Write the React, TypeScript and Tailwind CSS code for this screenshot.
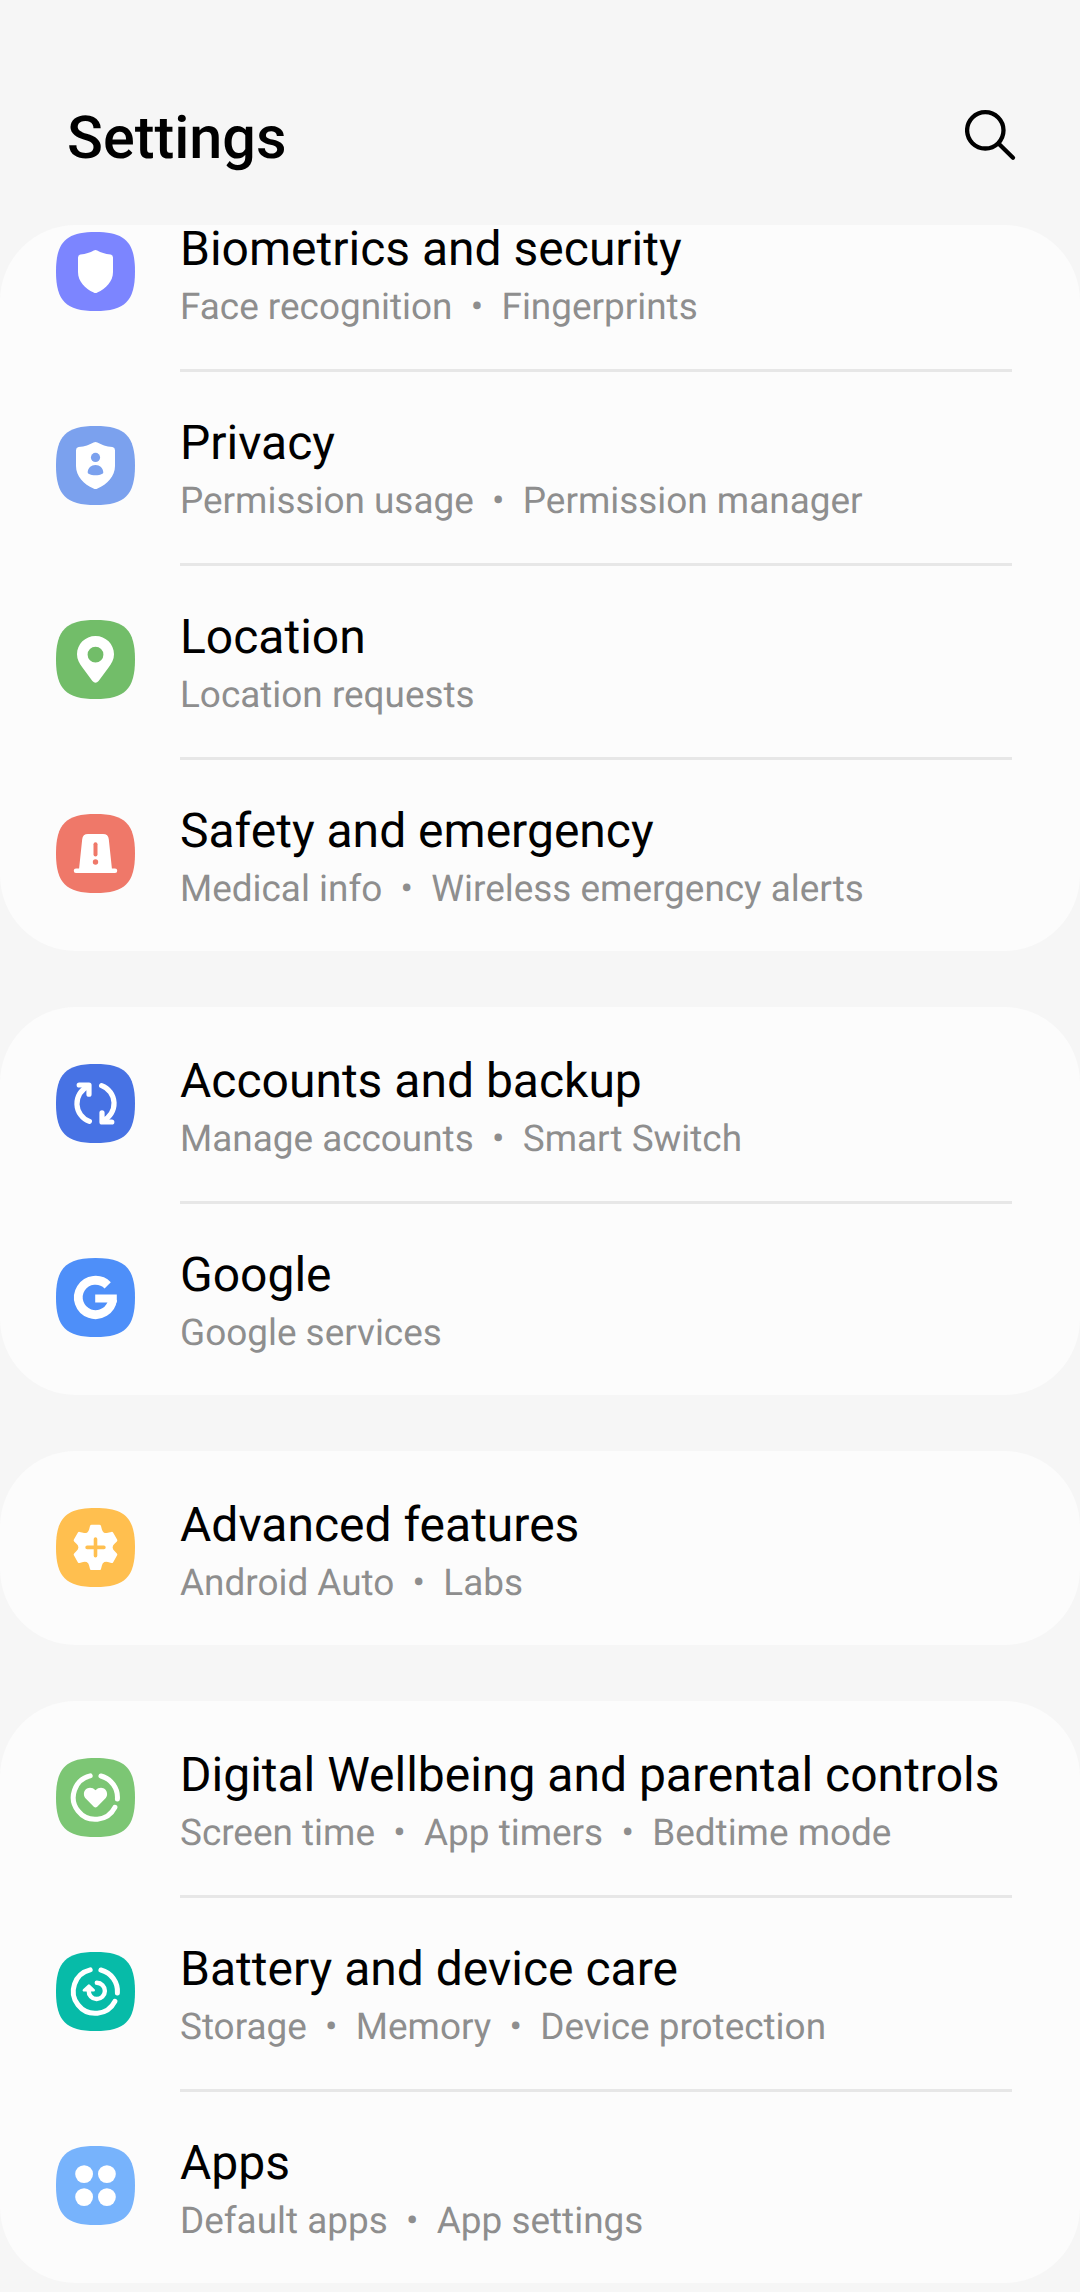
import { FunctionComponent, ReactNode } from "react";

type SettingsItem = {
  title: string;
  details: string[];
  color: string;
  icon: ReactNode;
};

type SettingsRowProps = SettingsItem & {
  divided?: boolean;
};

const Ring = () => (
  <g fill="none" stroke="#fff" strokeWidth="5" strokeLinecap="round">
    <path d="M34.2 17.9A22 22 0 1 0 58.9 49.3" />
    <path d="M44.9 18A22 22 0 0 1 61.4 41" />
  </g>
);

const ShieldIcon = () => (
  <path
    fill="#fff"
    d="M37.8 18.4Q39.5 17.6 41.2 18.4C45 20.5 49 21.8 54.5 22.6Q57 23 57 25.5V40C57 49.5 50 56.5 41.3 60.6Q39.5 61.6 37.7 60.6C29 56.5 22 49.5 22 40V25.5Q22 23 24.5 22.6C30 21.8 34 20.5 37.8 18.4Z"
  />
);

const PrivacyIcon = () => (
  <>
    <path
      fill="#fff"
      d="M37.6 16.4Q39.5 15.5 41.4 16.4C45.6 18.7 50 20.2 56.4 21.1Q59 21.6 59 24.3V40C59 50.5 51.2 58.2 41.5 62.6Q39.5 63.6 37.5 62.6C27.8 58.2 20 50.5 20 40V24.3Q20 21.6 22.6 21.1C29 20.2 33.4 18.7 37.6 16.4Z"
    />
    <circle cx="39.5" cy="31.4" r="4.6" fill="currentColor" />
    <path
      fill="currentColor"
      d="M31.7 46.4C31.7 42 35.2 38.9 39.5 38.9S47.3 42 47.3 46.4Q47.3 47.4 46.4 47.8C42.3 49.8 36.7 49.8 32.6 47.8Q31.7 47.4 31.7 46.4Z"
    />
  </>
);

const LocationIcon = () => (
  <path
    fill="#fff"
    fillRule="evenodd"
    d="M39.5 16C29.2 16 21 24.2 21 34.3C21 39.5 23.3 43.4 26.6 47.8L36.4 61.1Q39.5 64.6 42.6 61.1L52.4 47.8C55.7 43.4 58 39.5 58 34.3C58 24.2 49.8 16 39.5 16ZM39.5 26.8A7.9 7.9 0 1 1 39.5 42.6A7.9 7.9 0 1 1 39.5 26.8Z"
  />
);

const SafetyIcon = () => (
  <>
    <path
      fill="#fff"
      d="M32 20H47Q52.3 20 52.8 25.2L55.9 54.4H59A2.25 2.25 0 0 1 59 58.9H20A2.25 2.25 0 0 1 20 54.4H23.1L26.2 25.2Q26.7 20 32 20Z"
    />
    <path d="M39.5 30.2V40.4" stroke="currentColor" strokeWidth="4" strokeLinecap="round" />
    <circle cx="39.5" cy="48" r="2.7" fill="currentColor" />
  </>
);

const SyncIcon = () => (
  <g fill="none" stroke="#fff" strokeWidth="5.2" strokeLinecap="round" strokeLinejoin="round">
    <path d="M33.4 57.4A19 19 0 0 1 32 22.3" />
    <path d="M23.2 21H33V30.2" />
    <path d="M45.6 21.6A19 19 0 0 1 47 56.7" />
    <path d="M55.8 58H46V48.8" />
  </g>
);

const GoogleIcon = () => (
  <g fill="none" stroke="#fff">
    <path d="M51.7 27.3A17.2 17.2 0 1 0 56.6 41.5" strokeWidth="8.8" />
    <path d="M39.2 40.5H60.8" strokeWidth="8" />
  </g>
);

const AdvancedIcon = () => (
  <>
    <circle cx="39.5" cy="39.4" r="17" fill="#fff" />
    {[0, 60, 120, 180, 240, 300].map((angle) => (
      <path
        key={angle}
        transform={`rotate(${angle} 39.5 39.4)`}
        fill="#fff"
        d="M31 24.8Q32.6 23.4 33.1 21.4L34 17.9Q34.4 16.7 35.6 16.7H43.4Q44.6 16.7 45 17.9L45.9 21.4Q46.4 23.4 48 24.8Z"
      />
    ))}
    <path
      d="M39.5 31V47.8M31.1 39.4H47.9"
      stroke="currentColor"
      strokeWidth="3.6"
      strokeLinecap="round"
    />
  </>
);

const WellbeingIcon = () => (
  <>
    <Ring />
    <path
      fill="#fff"
      d="M39.5 32.3C41 30.6 43 29.8 45 29.8C48.4 29.8 51.1 32.6 51.1 36C51.1 38 50.3 39.6 48.8 41.1L41.2 48.8Q39.5 50.4 37.8 48.8L30.2 41.1C28.7 39.6 27.9 38 27.9 36C27.9 32.6 30.6 29.8 34 29.8C36 29.8 38 30.6 39.5 32.3Z"
    />
  </>
);

const BatteryIcon = () => (
  <>
    <Ring />
    <path
      d="M40.8 30.8A8.1 8.1 0 1 1 32.7 38.5"
      fill="none"
      stroke="#fff"
      strokeWidth="4.4"
      strokeLinecap="round"
    />
    <path
      d="M32.9 33.8L28 38.2H37.6Z"
      fill="#fff"
      stroke="#fff"
      strokeWidth="2.8"
      strokeLinejoin="round"
    />
  </>
);

const AppsIcon = () => (
  <g fill="#fff">
    <circle cx="28.1" cy="28.1" r="8.9" />
    <circle cx="50.9" cy="28.1" r="8.9" />
    <circle cx="28.1" cy="51.1" r="8.9" />
    <circle cx="50.9" cy="51.1" r="8.9" />
  </g>
);

const groups: SettingsItem[][] = [
  [
    {
      title: "Biometrics and security",
      details: ["Face recognition", "Fingerprints"],
      color: "text-[#7c85ff]",
      icon: <ShieldIcon />,
    },
    {
      title: "Privacy",
      details: ["Permission usage", "Permission manager"],
      color: "text-[#7ba1ee]",
      icon: <PrivacyIcon />,
    },
    {
      title: "Location",
      details: ["Location requests"],
      color: "text-[#72bd69]",
      icon: <LocationIcon />,
    },
    {
      title: "Safety and emergency",
      details: ["Medical info", "Wireless emergency alerts"],
      color: "text-[#ef7869]",
      icon: <SafetyIcon />,
    },
  ],
  [
    {
      title: "Accounts and backup",
      details: ["Manage accounts", "Smart Switch"],
      color: "text-[#4772e4]",
      icon: <SyncIcon />,
    },
    {
      title: "Google",
      details: ["Google services"],
      color: "text-[#4e8ff9]",
      icon: <GoogleIcon />,
    },
  ],
  [
    {
      title: "Advanced features",
      details: ["Android Auto", "Labs"],
      color: "text-[#ffbf4f]",
      icon: <AdvancedIcon />,
    },
  ],
  [
    {
      title: "Digital Wellbeing and parental controls",
      details: ["Screen time", "App timers", "Bedtime mode"],
      color: "text-[#7cc674]",
      icon: <WellbeingIcon />,
    },
    {
      title: "Battery and device care",
      details: ["Storage", "Memory", "Device protection"],
      color: "text-[#07bba8]",
      icon: <BatteryIcon />,
    },
    {
      title: "Apps",
      details: ["Default apps", "App settings"],
      color: "text-[#77b3fc]",
      icon: <AppsIcon />,
    },
  ],
];

const SettingsRow: FunctionComponent<SettingsRowProps> = ({
  title,
  details,
  color,
  icon,
  divided,
}) => (
  <div className="flex h-[194px] shrink-0 pl-14 pr-[68px]">
    <svg viewBox="0 0 79 79" className={`mt-[57px] size-[79px] shrink-0 ${color}`}>
      <path
        fill="currentColor"
        d="M0 39.5C0 10 10 0 39.5 0S79 10 79 39.5S69 79 39.5 79S0 69 0 39.5Z"
      />
      {icon}
    </svg>
    <div
      className={`ml-[45px] flex-1 whitespace-pre border-t-[3px] pt-[48px] ${
        divided ? "border-[#e7e7e7]" : "border-transparent"
      }`}
    >
      <h2 className="text-5xl leading-[46px] text-black">{title}</h2>
      <p className="mt-3.5 text-[36.9px] leading-[44px] text-[#8e8e8e]">
        {details.join("  •  ")}
      </p>
    </div>
  </div>
);

export default function App() {
  return (
    <div className="flex h-[2292px] w-[1080px] flex-col overflow-hidden bg-[#f6f6f6] font-['Roboto',sans-serif] [text-rendering:geometricPrecision]">
      <header className="flex h-[225px] shrink-0 items-start justify-between pl-[67px] pr-[63px]">
        <h1 className="mt-[105px] text-[59.3px] font-medium leading-[68px] text-black">
          Settings
        </h1>
        <svg
          viewBox="0 0 52 52"
          className="mt-[109px] size-[52px]"
          fill="none"
          stroke="#000"
          strokeWidth="4.3"
          strokeLinecap="round"
        >
          <circle cx="20.3" cy="21.3" r="18.2" />
          <path d="M34 35L48 48.8" />
        </svg>
      </header>
      <main className="flex flex-col gap-14">
        {groups.map((items, key) => (
          <section
            key={key}
            // the first group is scrolled up by 50px, so its rows hang from the bottom
            className="flex flex-col justify-end rounded-[76px] bg-[#fcfcfc] first:h-[726px]"
          >
            {items.map((item, index) => (
              <SettingsRow key={item.title} {...item} divided={index > 0} />
            ))}
          </section>
        ))}
      </main>
    </div>
  );
}
